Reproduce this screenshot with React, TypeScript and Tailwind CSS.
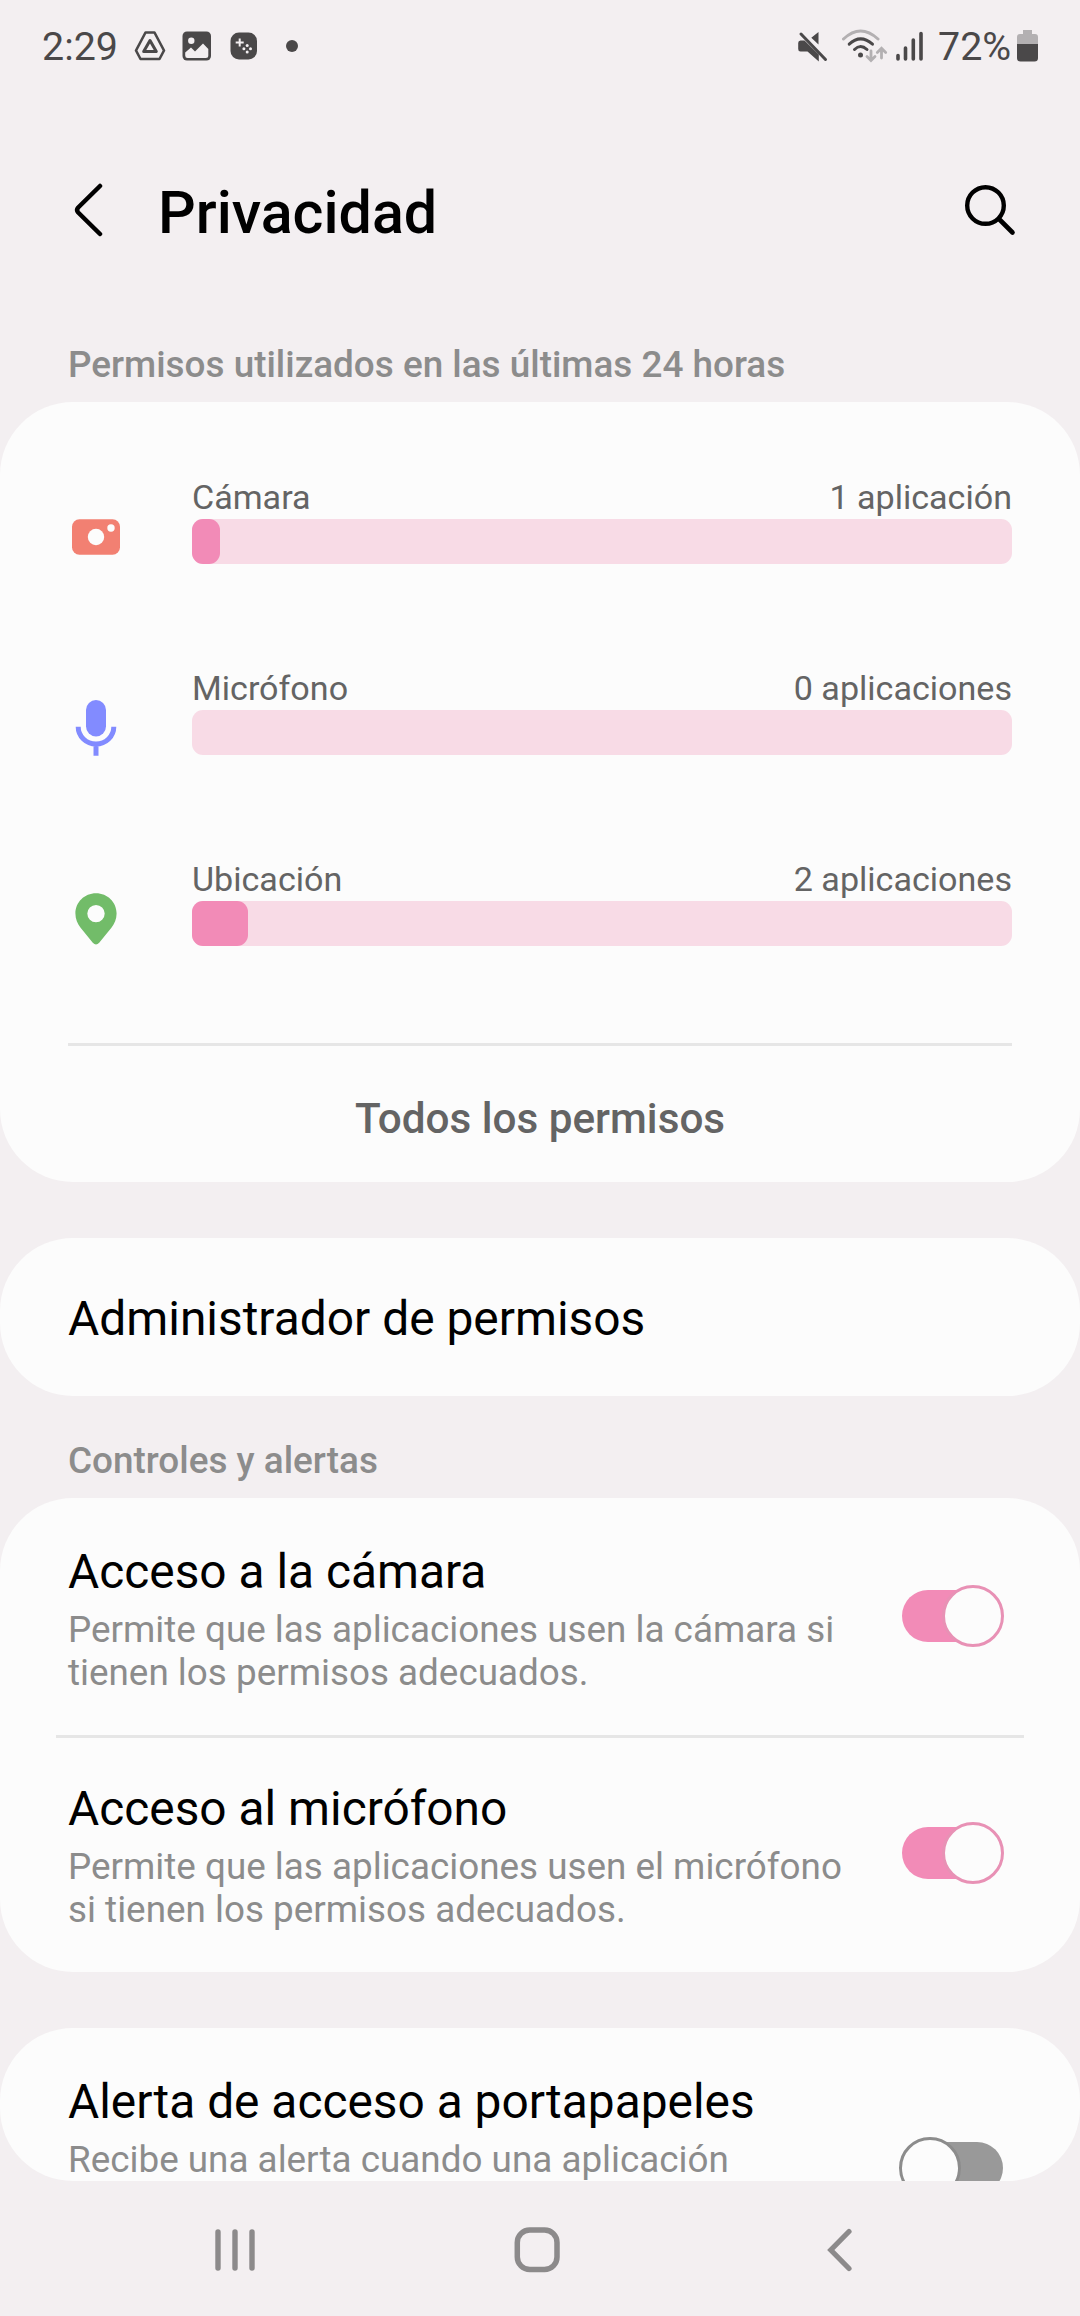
import type { ReactNode } from "react";
import clsx from "clsx";

function StatusBar() {
  return (
    <div className="flex h-[92px] items-center justify-between pr-[42px] pl-[42px] text-[#4a4849]">
      <div className="flex items-center">
        <span className="w-[92px] pt-[2px] text-[39.400px] leading-[92px]">2:29</span>
        {/* drive */}
        <svg width="32" height="32" viewBox="0 0 32 32" className="fill-none stroke-current">
          <path d="M11.5 2.5h9L30 20.5l-4.500 8.500h-19L2 20.500Z" strokeWidth="2.600" strokeLinejoin="round" />
          <path d="M16 10.500 22.300 21.500H9.700Z" strokeWidth="3" strokeLinejoin="round" />
        </svg>
        {/* gallery */}
        <svg width="30" height="30" viewBox="0 0 30 30" className="ml-4">
          <rect x="0.500" y="0.500" width="28.500" height="29" rx="4.500" className="fill-current" />
          <circle cx="9.300" cy="9.700" r="3.200" className="fill-[#f3eff1]" />
          <path d="M3.200 21.500 9 16.500l4 4 8-8 5.300 5.500v6.500a2.500 2.500 0 0 1-2.500 2.500h-18a2.500 2.500 0 0 1-2.600-2.500Z" className="fill-[#f3eff1]" />
        </svg>
        {/* game launcher */}
        <svg width="28" height="28" viewBox="0 0 28 28" className="ml-[18px]">
          <rect x="0.500" y="0.500" width="26.500" height="27" rx="8.500" className="fill-current" />
          <path d="M9.700 6.500v8M5.700 10.500h8" strokeWidth="2" className="stroke-[#f3eff1]" />
          <g className="fill-[#f3eff1]">
            <circle cx="17.200" cy="13.500" r="1.500" />
            <circle cx="13.900" cy="16.800" r="1.500" />
            <circle cx="20.500" cy="16.800" r="1.500" />
            <circle cx="17.200" cy="20.100" r="1.500" />
          </g>
        </svg>
        <span className="ml-7 size-3 rounded-full bg-[#4a4849]" />
      </div>

      <div className="flex items-center">
        {/* muted */}
        <svg width="30" height="32" viewBox="0 0 30 32" className="mr-[14px]">
          <path d="M20.500 2v12.500L13.300 7.800ZM2.500 10.500h4L20.800 24.500V31.500L9.500 21.500h-7Q.2 21.500.2 19v-6Q.2 10.500 2.500 10.500Z" className="fill-current" />
          <path d="M3 4 27.500 29.500" strokeWidth="3" strokeLinecap="round" className="stroke-current" />
        </svg>
        {/* wifi */}
        <svg width="46" height="34" viewBox="0 0 46 34" className="mr-2 fill-none">
          <g strokeLinecap="round" strokeWidth="3">
            <path d="M1.500 10Q18.500-6 36 10" className="stroke-[#b3b0b2]" />
            <path d="M7.200 15.200Q18.500 4.500 30.500 15.200" className="stroke-current" />
            <path d="M12.500 20.500Q18.500 14.500 25 20.500" className="stroke-current" />
          </g>
          <circle cx="18.500" cy="26" r="2.500" className="fill-current" />
          <path d="M29 22v9M25 27.500l4 4 4-4M39.500 29V20M35.300 23.500l4.200-4.200 4.200 4.200" strokeWidth="2.800" strokeLinecap="round" className="stroke-[#b3b0b2]" />
        </svg>
        {/* signal */}
        <svg width="28" height="30" viewBox="0 0 28 30" className="mr-[14px]">
          <path d="M2 24.500v3.500M9.500 17v11M17.300 9v19M25 2.500v25.500" strokeWidth="3.600" strokeLinecap="round" className="stroke-current" />
        </svg>
        <span className="w-[79px] pt-[2px] text-[39.400px] leading-[92px]">72%</span>
        {/* battery */}
        <svg width="21" height="32" viewBox="0 0 21 32">
          <path d="M6 0h9v4h3q3 0 3 3v8H0V7q0-3 3-3h3Z" className="fill-[#b3b0b2]" />
          <path d="M0 14h21v14q0 3.500-3.500 3.500h-14Q0 31.500 0 28Z" className="fill-current" />
        </svg>
      </div>
    </div>
  );
}

function CameraIcon() {
  return (
    <svg width="64" height="96" viewBox="0 0 64 96">
      <rect x="8" y="42.300" width="48" height="35.500" rx="7.500" className="fill-[#f28072]" />
      <circle cx="32" cy="60" r="8.200" className="fill-[#fcfcfc]" />
      <circle cx="47" cy="51" r="3.700" className="fill-[#fcfcfc]" />
    </svg>
  );
}

function MicIcon() {
  return (
    <svg width="64" height="96" viewBox="0 0 64 96">
      <rect x="22" y="32" width="20" height="36.500" rx="10" className="fill-[#828bff]" />
      <path d="M14.200 58.700a17.800 17.300 0 0 0 35.600 0M32 76v11.700" strokeWidth="5" className="fill-none stroke-[#828bff]" />
    </svg>
  );
}

function PinIcon() {
  return (
    <svg width="64" height="96" viewBox="0 0 64 96">
      <path
        d="M32 34.300c-11.500 0-20.600 9-20.600 20.300 0 5.500 2.200 10.200 5 13.900L28.800 83.800q3.200 3.200 6.400 0L47.600 68.500c2.800-3.700 5-8.400 5-13.900C52.600 43.300 43.500 34.300 32 34.300Zm0 11.600a8.700 8.700 0 1 1 0 17.400 8.700 8.700 0 0 1 0-17.400Z"
        fillRule="evenodd"
        className="fill-[#72bc69]"
      />
    </svg>
  );
}

const usage = [
  { name: "Cámara", count: "1 aplicación", width: 28, icon: <CameraIcon /> },
  { name: "Micrófono", count: "0 aplicaciones", width: 0, icon: <MicIcon /> },
  { name: "Ubicación", count: "2 aplicaciones", width: 56, icon: <PinIcon /> },
];

function Card({ className, children }: { className?: string; children: ReactNode }) {
  return <section className={clsx("overflow-hidden rounded-[73px] bg-[#fcfcfc]", className)}>{children}</section>;
}

function Toggle({ on }: { on: boolean }) {
  return (
    <div className="relative h-[62px] w-[105px] shrink-0">
      <div
        className={clsx(
          "absolute top-[5px] h-[52px] rounded-full",
          on ? "left-[3px] w-[98px] bg-[#f28bb7]" : "left-[4px] w-[100px] bg-[#999999]"
        )}
      />
      <div
        className={clsx(
          "absolute top-0 size-[62px] rounded-full border-3 bg-[#fcfcfc]",
          on ? "right-0 border-[#e891b5]" : "left-0 border-[#8c8c8c]"
        )}
      />
    </div>
  );
}

function SettingRow({ title, lines, on, className }: { title: string; lines: string[]; on: boolean; className: string }) {
  return (
    <div className={clsx("flex items-center justify-between pr-[76px] pl-[68px]", className)}>
      <div className="h-full pt-[42px]">
        <h3 className="text-[47.850px] leading-[64px] text-black">{title}</h3>
        <p className="mt-[4px] text-[36.830px] leading-[43px] whitespace-nowrap text-[#8c8c8c]">
          {lines.map((l) => (
            <span key={l} className="block">
              {l}
            </span>
          ))}
        </p>
      </div>
      <Toggle on={on} />
    </div>
  );
}

export default function App() {
  return (
    <div className="flex h-[2316px] w-[1080px] flex-col overflow-hidden bg-[#f3eff1] font-['Roboto',sans-serif]">
      <StatusBar />

      <header className="flex h-[236px] items-center pr-16 pl-[74px]">
        <svg width="32" height="54" viewBox="0 0 32 54" className="fill-none stroke-black">
          <path d="M26 3 4.200 24.500Q2 27 4.200 29.500L26 51" strokeWidth="4.500" strokeLinecap="round" strokeLinejoin="round" />
        </svg>
        <h1 className="ml-[52px] flex-1 pt-[5px] text-[59.200px] leading-[70px] font-medium text-black">Privacidad</h1>
        <svg width="51" height="51" viewBox="0 0 51 51" className="fill-none stroke-black">
          <circle cx="20.500" cy="20.500" r="18.300" strokeWidth="4.400" />
          <path d="M34 34 47.500 47.500" strokeWidth="4.600" strokeLinecap="round" />
        </svg>
      </header>

      <h2 className="h-[74px] pl-[68px] text-[36.880px] leading-[74px] font-medium text-[#8c8c8c]">
        Permisos utilizados en las últimas 24 horas
      </h2>

      <Card className="h-[780px] shrink-0 px-[68px] pt-[75px]">
        <div className="-ml-1 flex flex-col gap-[95px]">
          {usage.map((u) => (
            <div key={u.name} className="flex h-24 gap-16">
              {u.icon}
              <div className="flex-1">
                <div className="flex h-[42px] justify-between text-[34.100px] leading-[40px] text-[#646464]">
                  <span>{u.name}</span>
                  <span>{u.count}</span>
                </div>
                <div className="h-[45px] rounded-[11px] bg-[#f8dbe6]">
                  <div className="h-full rounded-[11px] bg-[#f28bb7]" style={{ width: u.width }} />
                </div>
              </div>
            </div>
          ))}
        </div>
        <div className="mt-[88px] h-[3px] bg-[#e6e6e6]" />
        <button className="block w-full pt-[9px] text-center text-[42.250px] leading-[128px] font-medium text-[#646464]">
          Todos los permisos
        </button>
      </Card>

      <Card className="mt-14 flex h-[158px] shrink-0 items-center pt-[4px] pl-[68px]">
        <h3 className="text-[47.900px] leading-[64px] text-black">Administrador de permisos</h3>
      </Card>

      <h2 className="h-[102px] shrink-0 pl-[68px] text-[36.880px] leading-[130px] font-medium text-[#8c8c8c]">
        Controles y alertas
      </h2>

      <Card className="h-[474px] shrink-0">
        <SettingRow
          title="Acceso a la cámara"
          lines={["Permite que las aplicaciones usen la cámara si", "tienen los permisos adecuados."]}
          on
          className="h-[237px] [&>div:last-child]:-mt-[2px]"
        />
        <div className="mx-14 h-[3px] bg-[#e6e6e6]" />
        <SettingRow
          title="Acceso al micrófono"
          lines={["Permite que las aplicaciones usen el micrófono", "si tienen los permisos adecuados."]}
          on
          className="-mt-[3px] h-[237px] [&>div:last-child]:-mt-[2px]"
        />
      </Card>

      <Card className="mt-14 h-[153px] shrink-0">
        <SettingRow
          title="Alerta de acceso a portapapeles"
          lines={["Recibe una alerta cuando una aplicación"]}
          on={false}
          className="h-[280px]"
        />
      </Card>

      <nav className="flex h-[135px] shrink-0 items-center pt-[3px] pl-[215px] text-[#8c8a8b]">
        <svg width="40" height="42" viewBox="0 0 40 42" className="stroke-current">
          <path d="M3 3v36M20 3v36M37 3v36" strokeWidth="5.400" strokeLinecap="round" />
        </svg>
        <svg width="46" height="46" viewBox="0 0 46 46" className="ml-[259px] fill-none stroke-current">
          <rect x="3.300" y="3" width="39.700" height="39.500" rx="12.500" strokeWidth="5.500" />
        </svg>
        <svg width="27" height="44" viewBox="0 0 27 44" className="ml-[267px] fill-none stroke-current">
          <path d="M22 3.500 3.800 22 22 40.500" strokeWidth="5.200" strokeLinecap="round" />
        </svg>
      </nav>
    </div>
  );
}
